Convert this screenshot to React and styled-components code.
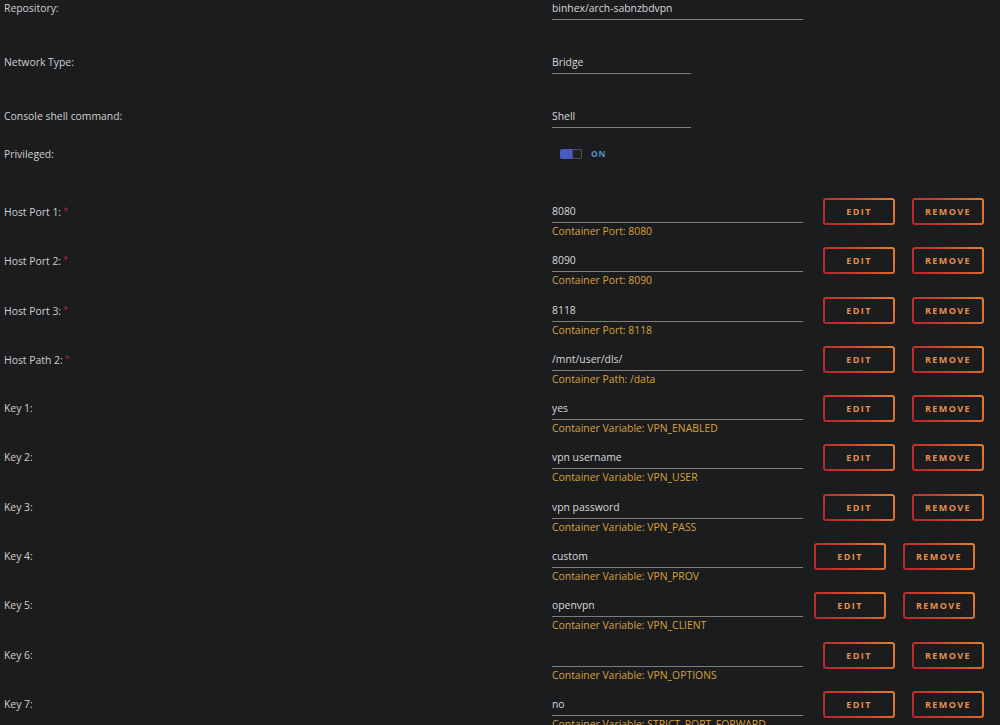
import React from 'react';
import styled, { createGlobalStyle } from 'styled-components';

const GlobalStyle = createGlobalStyle`
  html, body {
    margin: 0;
    padding: 0;
    background: #1b1c1e;
    overflow: hidden;
  }
  body {
    font-family: "Open Sans", "Noto Sans", sans-serif;
    color: #d2d2d2;
  }
`;

const settings = [
  { label: 'Repository:', value: 'binhex/arch-sabnzbdvpn', width: 251, height: 54 },
  { label: 'Network Type:', value: 'Bridge', width: 139, height: 54 },
  { label: 'Console shell command:', value: 'Shell', width: 139, height: 38 },
];

const mappings = [
  { label: 'Host Port 1:', required: true, value: '8080', hint: 'Container Port: 8080' },
  { label: 'Host Port 2:', required: true, value: '8090', hint: 'Container Port: 8090' },
  { label: 'Host Port 3:', required: true, value: '8118', hint: 'Container Port: 8118' },
  { label: 'Host Path 2:', required: true, value: '/mnt/user/dls/', hint: 'Container Path: /data' },
  { label: 'Key 1:', value: 'yes', hint: 'Container Variable: VPN_ENABLED' },
  { label: 'Key 2:', value: 'vpn username', hint: 'Container Variable: VPN_USER' },
  { label: 'Key 3:', value: 'vpn password', hint: 'Container Variable: VPN_PASS' },
  { label: 'Key 4:', value: 'custom', hint: 'Container Variable: VPN_PROV', shift: true },
  { label: 'Key 5:', value: 'openvpn', hint: 'Container Variable: VPN_CLIENT', shift: true },
  { label: 'Key 6:', value: '', hint: 'Container Variable: VPN_OPTIONS' },
  { label: 'Key 7:', value: 'no', hint: 'Container Variable: STRICT_PORT_FORWARD' },
];

const App = () => {
  return (
    <Page>
      <GlobalStyle />
      {settings.map((s) => (
        <Row key={s.label} $height={s.height}>
          <Label>{s.label}</Label>
          <Field $width={s.width}>
            <Value>{s.value}</Value>
          </Field>
        </Row>
      ))}
      <Row $height={57}>
        <Label>Privileged:</Label>
        <ToggleWrap>
          <Toggle>
            <Thumb />
          </Toggle>
          <ToggleText>ON</ToggleText>
        </ToggleWrap>
      </Row>
      {mappings.map((m) => (
        <Row key={m.label} $height={49.3}>
          <Label>
            {m.label}
            {m.required && <Required>*</Required>}
          </Label>
          <Field $width={251}>
            <Value>{m.value}</Value>
            <Hint>{m.hint}</Hint>
          </Field>
          <Actions $shift={m.shift}>
            <ActionButton>EDIT</ActionButton>
            <ActionButton>REMOVE</ActionButton>
          </Actions>
        </Row>
      ))}
    </Page>
  );
};

const Page = styled.div`
  display: flex;
  flex-direction: column;
  width: 1000px;
  height: 725px;
  overflow: hidden;
`;

const Row = styled.div`
  display: flex;
  align-items: flex-start;
  height: ${({ $height }) => $height}px;
  flex-shrink: 0;
`;

const Label = styled.div`
  width: 548px;
  padding-left: 4px;
  box-sizing: border-box;
  font-size: 10.4px;
  line-height: 16px;
  color: #d0d0d0;
  flex-shrink: 0;
`;

const Required = styled.span`
  color: #a8283c;
  margin-left: 2px;
  font-size: 9px;
  vertical-align: 2px;
`;

const Field = styled.div`
  width: ${({ $width }) => $width}px;
  margin-left: 4px;
  flex-shrink: 0;
`;

const Value = styled.div`
  height: 16px;
  font-size: 10.4px;
  line-height: 16px;
  color: #d8d8d8;
  padding-bottom: 3px;
  border-bottom: 1px solid #7c7c7c;
`;

const Hint = styled.div`
  font-size: 10.4px;
  line-height: 16px;
  color: #d9a13c;
  white-space: nowrap;
`;

const ToggleWrap = styled.div`
  display: flex;
  align-items: center;
  gap: 9px;
  margin-left: 12px;
  margin-top: 2px;
`;

const Toggle = styled.div`
  position: relative;
  width: 22px;
  height: 10px;
  border-radius: 2px;
  background: #4a5ac4;
`;

const Thumb = styled.div`
  position: absolute;
  right: 0;
  top: 0;
  width: 10px;
  height: 10px;
  box-sizing: border-box;
  border-radius: 2px;
  background: #202124;
  border: 1px solid #4a4b50;
`;

const ToggleText = styled.span`
  font-size: 8.5px;
  font-weight: 700;
  letter-spacing: 0.8px;
  color: #4f94c4;
`;

const Actions = styled.div`
  display: flex;
  gap: 17px;
  margin-top: -5px;
  margin-left: ${({ $shift }) => ($shift ? 11 : 20)}px;
`;

const ActionButton = styled.button`
  width: 72px;
  height: 27px;
  box-sizing: border-box;
  border: 2px solid transparent;
  border-radius: 3px;
  background:
    linear-gradient(#1b1c1e, #1b1c1e) padding-box,
    linear-gradient(60deg, #b8242e 0%, #cc402c 45%, #e0812f 100%) border-box;
  color: #e8904a;
  font-family: "Open Sans", "Noto Sans", sans-serif;
  font-size: 9px;
  font-weight: 700;
  letter-spacing: 1.4px;
  padding: 0;
  cursor: pointer;
`;

export default App;
